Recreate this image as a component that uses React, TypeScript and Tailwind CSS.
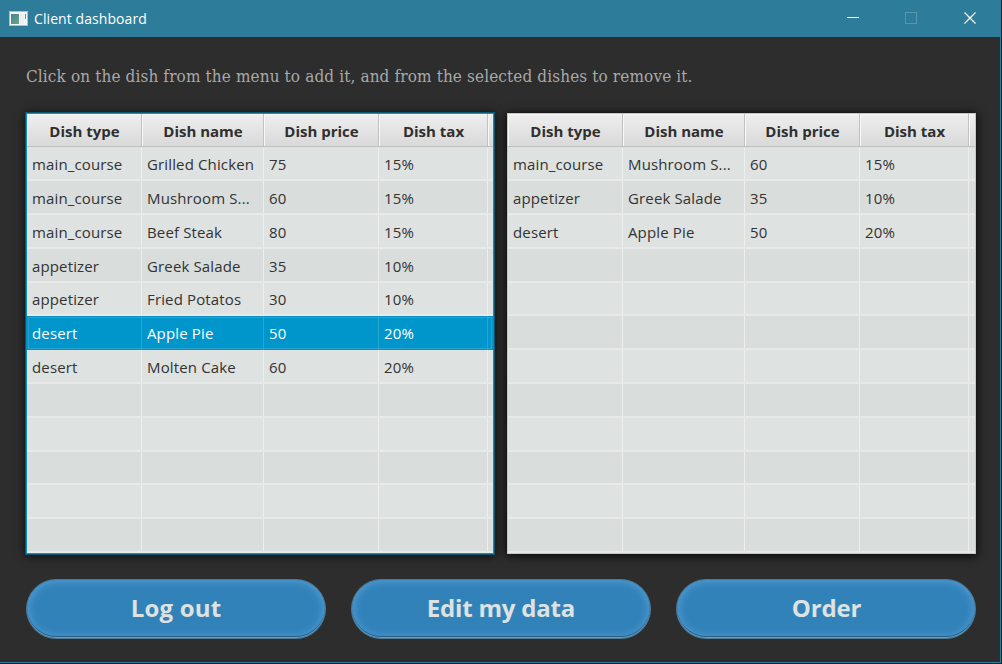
type Dish = [string, string, string, string];

const menu: Dish[] = [
  ['main_course', 'Grilled Chicken', '75', '15%'],
  ['main_course', 'Mushroom S...', '60', '15%'],
  ['main_course', 'Beef Steak', '80', '15%'],
  ['appetizer', 'Greek Salade', '35', '10%'],
  ['appetizer', 'Fried Potatos', '30', '10%'],
  ['desert', 'Apple Pie', '50', '20%'],
  ['desert', 'Molten Cake', '60', '20%'],
];

const chosen: Dish[] = [
  ['main_course', 'Mushroom S...', '60', '15%'],
  ['appetizer', 'Greek Salade', '35', '10%'],
  ['desert', 'Apple Pie', '50', '20%'],
];

const headers = ['Dish type', 'Dish name', 'Dish price', 'Dish tax'];
const ROWS = 12;
const GRID = 'grid grid-cols-[115px_122px_115px_109px_1fr]';

function Table({ rows, selected = -1, focused = false }: { rows: Dish[]; selected?: number; focused?: boolean }) {
  return (
    <div
      className={
        focused
          ? 'flex h-[441px] w-[468px] flex-col overflow-hidden border border-[#0093c4] bg-[#dee2e1] shadow-[0_0_0_1px_#0b5773,0_1px_9px_1px_rgba(0,0,0,0.75)]'
          : 'flex h-[441px] w-[469px] flex-col overflow-hidden border border-[#c3c6c6] bg-[#dee2e1] shadow-[0_1px_9px_1px_rgba(0,0,0,0.8)]'
      }
    >
      <div className={GRID + ' mb-[0.5px] h-[33px] shrink-0 border-b border-[#bfbfbf] bg-linear-to-b from-[#efefef] to-[#d9d9d9]'}>
        {headers.map((h) => (
          <div
            key={h}
            className="flex items-center justify-center border-r border-[#c2c2c2] pt-[2px] pl-px text-[15px] font-bold text-[#2f2f2f] shadow-[inset_1px_1px_0_#f8f8f8]"
          >
            {h}
          </div>
        ))}
        <div className="mr-[2px] shadow-[inset_1px_1px_0_#f8f8f8]" />
      </div>
      {Array.from({ length: ROWS }, (_, i) => {
        const sel = i === selected;
        const tone = sel
          ? ' bg-[#0096cb] text-white shadow-[inset_0_0_0_1px_#0a8fc0,inset_0_0_0_2px_#26a4d0]'
          : i % 2
            ? ' bg-[#d9dddc] text-[#333] border-b-2 border-[#e8eae9]'
            : ' bg-[#dee2e1] text-[#333] border-b-2 border-[#e8eae9]';
        return (
          <div key={i} className={GRID + ' h-[33.8px] shrink-0' + tone}>
            {[0, 1, 2, 3].map((c) => (
              <div
                key={c}
                className={
                  'flex items-center whitespace-nowrap border-r pl-[5px] text-[15px] tracking-[0.14px] ' +
                  (sel ? 'border-[#26a4d0]' : 'border-[#edefee] pt-[2px]')
                }
              >
                {rows[i]?.[c]}
              </div>
            ))}
          </div>
        );
      })}
    </div>
  );
}

function PillButton({ label, tracking = '' }: { label: string; tracking?: string }) {
  return (
    <button
      className={
        'flex h-[60px] w-[300px] items-center justify-center rounded-full border border-[#4c7893] bg-[#3282ba] pb-[3px] text-2xl font-bold text-[#dee2e1] shadow-[inset_0_-1px_0_#5aa5d8,inset_0_-2px_0_#2a5d80,inset_0_0_8px_1px_#559fd3] ' +
        tracking
      }
    >
      {label}
    </button>
  );
}

export default function App() {
  return (
    <div className="h-[664px] w-[1002px] overflow-hidden bg-[#171c20] font-['Open_Sans',sans-serif]">
      <div className="flex h-[663px] w-[1001px] flex-col border-r border-b border-[#2c7c9c] bg-[#2d2d2d]">
        <header className="flex h-[37px] shrink-0 items-center bg-[#2d7d9a] pl-[9px] text-white">
          <svg width="19" height="15" viewBox="0 0 19 15">
            <defs>
              <linearGradient id="pane" x1="0" y1="0" x2="1" y2="1">
                <stop offset="0" stopColor="#4a7fa0" />
                <stop offset="1" stopColor="#66ab7c" />
              </linearGradient>
            </defs>
            <rect width="19" height="15" fill="#b9bdbc" />
            <rect x="1" y="1" width="17" height="13" fill="#f7f7f7" />
            <rect x="2" y="3" width="8" height="10" fill="url(#pane)" />
            <rect x="11" y="3" width="4" height="10" fill="#eceff3" />
            <rect x="16" y="3" width="1" height="5" fill="#5ca180" />
          </svg>
          <span className="ml-[6px] text-sm tracking-[0.08px]">Client dashboard</span>
          <svg className="ml-auto mr-[22px]" width="132" height="14" viewBox="0 0 132 14" fill="none">
            <path d="M1 5.5H13" stroke="#fff" />
            <rect x="59.5" y="0.5" width="11" height="11" stroke="#5697ae" />
            <path d="M118.5 0.5L129.5 11.5M129.5 0.5L118.5 11.5" stroke="#fff" strokeWidth="1.2" />
          </svg>
        </header>
        <main className="flex flex-col pl-[26px]">
          <p className="mt-[27px] h-[24px] whitespace-nowrap font-['DejaVu_Serif_Condensed','DejaVu_Serif',serif] text-[17px] leading-6 tracking-[0.12px] text-[#a9a9a9]">
            Click on the dish from the menu to add it, and from the selected dishes to remove it.
          </p>
          <div className="mt-[25px] flex gap-[13px]">
            <Table rows={menu} selected={5} focused />
            <Table rows={chosen} />
          </div>
          <div className="mt-[25px] flex gap-[25px]">
            <PillButton label="Log out" tracking="tracking-[0.2px]" />
            <PillButton label="Edit my data" tracking="tracking-[-0.2px]" />
            <PillButton label="Order" tracking="tracking-[-0.2px] pl-px" />
          </div>
        </main>
      </div>
    </div>
  );
}
